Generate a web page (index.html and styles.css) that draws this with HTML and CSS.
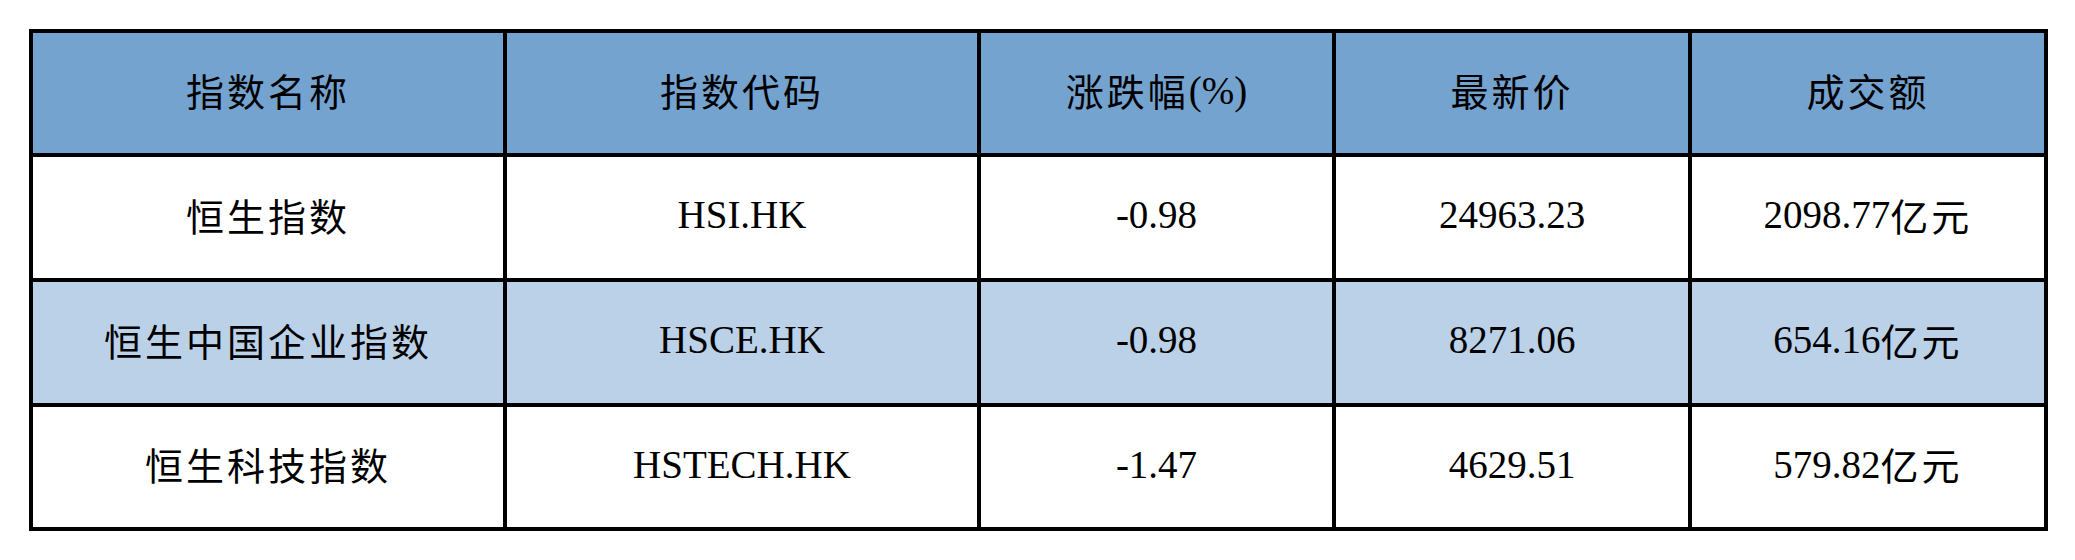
FILE: index.html
```html
<!DOCTYPE html>
<html lang="zh-CN">
<head>
<meta charset="utf-8">
<title>恒生指数</title>
<link rel="stylesheet" href="styles.css">
</head>
<body>
<div class="table">
  <div class="cell head"><span class="zh">指数名称</span></div>
  <div class="cell head"><span class="zh">指数代码</span></div>
  <div class="cell head"><span class="zh">涨跌幅</span>(%)</div>
  <div class="cell head"><span class="zh">最新价</span></div>
  <div class="cell head"><span class="zh">成交额</span></div>

  <div class="cell"><span class="zh">恒生指数</span></div>
  <div class="cell">HSI.HK</div>
  <div class="cell">-0.98</div>
  <div class="cell">24963.23</div>
  <div class="cell">2098.77<span class="zh">亿元</span></div>

  <div class="cell alt"><span class="zh">恒生中国企业指数</span></div>
  <div class="cell alt">HSCE.HK</div>
  <div class="cell alt">-0.98</div>
  <div class="cell alt">8271.06</div>
  <div class="cell alt">654.16<span class="zh">亿元</span></div>

  <div class="cell"><span class="zh">恒生科技指数</span></div>
  <div class="cell">HSTECH.HK</div>
  <div class="cell">-1.47</div>
  <div class="cell">4629.51</div>
  <div class="cell">579.82<span class="zh">亿元</span></div>
</div>
</body>
</html>
```
FILE: styles.css
```css
html, body {
  margin: 0;
  padding: 0;
  background: #ffffff;
}

body {
  padding: 29px 0 0 29px;
}

.table {
  display: grid;
  grid-template-columns: 470px 470px 351px 352px 352px;
  grid-template-rows: 120px 121px 121px 120px;
  gap: 4px;
  padding: 4px;
  width: max-content;
  background: #000000;
}

.cell {
  display: flex;
  align-items: center;
  justify-content: center;
  padding-bottom: 6px;
  box-sizing: border-box;
  background: #ffffff;
  color: #000000;
  font-family: "Liberation Serif", "Times New Roman", serif;
  font-size: 39px;
  line-height: 1;
  white-space: nowrap;
}

.head {
  background: #74a3cf;
}

.alt {
  background: #bbd1e8;
}

.zh {
  font-family: "Noto Sans CJK SC", sans-serif;
  font-size: 38px;
  letter-spacing: 3px;
}
```
